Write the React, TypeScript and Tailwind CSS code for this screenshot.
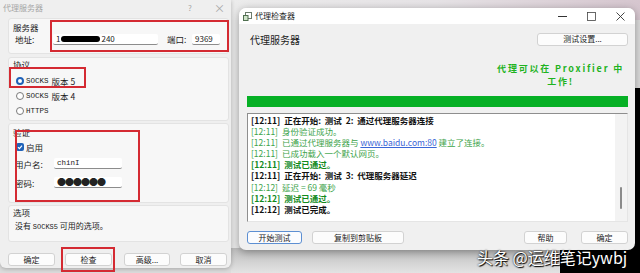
import React from "react";

type LogLine = { time: string; kind: "head" | "ok" | "pass"; text: React.ReactNode };

const logLines: LogLine[] = [
  { time: "[12:11]", kind: "head", text: "正在开始:  测试  2:  通过代理服务器连接" },
  { time: "[12:11]", kind: "ok", text: "身份验证成功。" },
  {
    time: "[12:11]",
    kind: "ok",
    text: (
      <>
        已通过代理服务器与 <span className="text-[#3b66d6] underline">www.baidu.com:80</span> 建立了连接。
      </>
    ),
  },
  { time: "[12:11]", kind: "ok", text: "已成功载入一个默认网页。" },
  { time: "[12:11]", kind: "pass", text: "测试已通过。" },
  { time: "[12:11]", kind: "head", text: "正在开始:  测试  3:  代理服务器延迟" },
  { time: "[12:12]", kind: "ok", text: "延迟 = 69 毫秒" },
  { time: "[12:12]", kind: "pass", text: "测试已通过。" },
  { time: "[12:12]", kind: "head", text: "测试已完成。" },
];

const kindClass = {
  head: "text-[#111] font-bold",
  ok: "text-[#3da34a]",
  pass: "text-[#128a1c] font-bold",
};

function Radio({ on }: { on?: boolean }) {
  return on ? (
    <span className="ml-[3px] w-[8px] h-[8px] rounded-full border-[2px] border-[#2062b8] bg-white" />
  ) : (
    <span className="ml-[3px] w-[8px] h-[8px] rounded-full border border-[#7a7a7a] bg-white" />
  );
}

function Field({ w, children }: { w: string; children?: React.ReactNode }) {
  return (
    <div className={`${w} h-[11px] bg-white border-b border-[#8c8c8c] rounded-[2px] flex items-center pl-[3px] text-[8px] text-[#222]`}>
      {children}
    </div>
  );
}

function Btn({ w, children, primary }: { w: string; children: React.ReactNode; primary?: boolean }) {
  return (
    <div
      className={`${w} h-[13px] rounded-[3px] flex items-center justify-center text-[8px] text-[#222] ${
        primary ? "bg-[#fbfcfe] border border-[#5d8fd2]" : "bg-[#fcfcfc] border border-[#d2d2d2]"
      }`}
    >
      {children}
    </div>
  );
}

function ServerDialog() {
  return (
    <div className="absolute left-0 top-0 w-[231px] h-[268px] bg-[#efefef] rounded-b-[6px] shadow-[0_1px_4px_rgba(0,0,0,0.25)] flex flex-col text-[8.5px] leading-[10px] text-[#1c1c1c]">
      {/* title bar */}
      <div className="h-[15px] flex items-center pl-[3px] pr-[7px] text-[#a6a6a6]">
        <span className="text-[8px]">代理服务器</span>
        <span className="ml-auto w-[10px] text-center text-[8px]">?</span>
        <span className="ml-[19px] w-[10px] text-center text-[11px]">×</span>
      </div>

      <div className="pl-[8px] pr-[2px] flex flex-col">
        {/* server */}
        <div className="mt-[3px] h-[36px] bg-[#f7f7f7] border border-[#e3e3e3] rounded-[3px] pl-[4px] pt-[3px]">
          <div>服务器</div>
          <div className="flex items-center mt-[1px] h-[12px]">
            <span className="pl-[2px] w-[40px]">地址:</span>
            <Field w="w-[105px]">
              1<span className="inline-block w-[39px] h-[6px] rounded-full bg-black mx-[1px]" />
              240
            </Field>
            <span className="ml-[9px] w-[25px]">端口:</span>
            <Field w="w-[28px]">9369</Field>
          </div>
        </div>

        {/* protocol */}
        <div className="mt-[3px] h-[64px] bg-[#f7f7f7] border border-[#e3e3e3] rounded-[3px] pl-[4px] pt-[1px]">
          <div>协议</div>
          <div className="mt-[4px] flex flex-col">
            {[
              { on: true, label: "版本 5", proto: "SOCKS" },
              { on: false, label: "版本 4", proto: "SOCKS" },
              { on: false, label: "", proto: "HTTPS" },
            ].map((r) => (
              <div key={r.proto + r.label} className="h-[15px] flex items-center">
                <Radio on={r.on} />
                <span className="ml-[2px] font-[family-name:'Liberation_Mono',monospace] text-[7.5px]">{r.proto}</span>
                {r.label && <span className="ml-[3px]">{r.label}</span>}
              </div>
            ))}
          </div>
        </div>

        {/* auth */}
        <div className="mt-[2px] h-[80px] bg-[#f7f7f7] border border-[#e3e3e3] rounded-[3px] pl-[4px] pt-[3px]">
          <div>验证</div>
          <div className="mt-[4px] h-[12px] flex items-center">
            <span className="ml-[3px] w-[8px] h-[8px] rounded-[2px] bg-[#2062b8] flex items-center justify-center">
              <svg width="6" height="6" viewBox="0 0 6 6">
                <path d="M1 3.2 L2.4 4.6 L5 1.6" stroke="white" strokeWidth="1.2" fill="none" />
              </svg>
            </span>
            <span className="ml-[2px]">启用</span>
          </div>
          <div className="mt-[5px] flex items-center">
            <span className="pl-[2px] w-[41px]">用户名:</span>
            <Field w="w-[68px]">
              <span className="font-[family-name:'Liberation_Mono',monospace] text-[7.5px]">chinI</span>
            </Field>
          </div>
          <div className="mt-[8px] flex items-center">
            <span className="pl-[2px] w-[41px]">密码:</span>
            <Field w="w-[68px]">
              <span className="text-[9px] leading-[10px] tracking-[-1px]">●●●●●●</span>
            </Field>
          </div>
        </div>

        {/* options */}
        <div className="mt-[2px] h-[37px] bg-[#f7f7f7] border border-[#e3e3e3] rounded-[3px] pl-[4px] pt-[1px]">
          <div>选项</div>
          <div className="mt-[4px] pl-[2px] text-[8px]">
            没有 <span className="font-[family-name:'Liberation_Mono',monospace] text-[7px]">SOCKS5</span> 可用的选项。
          </div>
        </div>

        {/* buttons */}
        <div className="mt-[11px] flex">
          <Btn w="w-[47px]">确定</Btn>
          <div className="ml-[10px]">
            <Btn w="w-[47px]">检查</Btn>
          </div>
          <div className="ml-[12px]">
            <Btn w="w-[46px]">高级...</Btn>
          </div>
          <div className="ml-[10px]">
            <Btn w="w-[47px]">取消</Btn>
          </div>
        </div>
      </div>
    </div>
  );
}

function CheckerWindow() {
  return (
    <div className="absolute left-[239px] top-[8px] w-[396px] h-[242px] rounded-[7px] overflow-hidden bg-[#f0f0f0] shadow-[0_2px_8px_rgba(0,0,0,0.35)] flex flex-col text-[#1c1c1c]">
      {/* title bar */}
      <div className="h-[16px] bg-white flex items-center pl-[4px]">
        <svg width="9" height="9" viewBox="0 0 9 9">
          <rect x="2.5" y="0.5" width="6" height="6" fill="#fff" stroke="#6b7b6b" />
          <rect x="0.5" y="3.5" width="4.5" height="5" fill="#cfe3c9" stroke="#4f6f4f" />
        </svg>
        <span className="ml-[3px] text-[8px] text-[#222]">代理检查器</span>
        <div className="ml-auto flex h-full">
          <div className="w-[29px] flex items-center justify-center">
            <svg width="9" height="9" viewBox="0 0 9 9">
              <path d="M0 4.5 H9" stroke="#333" strokeWidth="1" />
            </svg>
          </div>
          <div className="w-[29px] flex items-center justify-center">
            <svg width="9" height="9" viewBox="0 0 9 9">
              <rect x="0.5" y="0.5" width="8" height="8" fill="none" stroke="#444" strokeWidth="0.8" />
            </svg>
          </div>
          <div className="w-[29px] flex items-center justify-center">
            <svg width="9" height="9" viewBox="0 0 9 9">
              <path d="M0.5 0.5 L8.5 8.5 M8.5 0.5 L0.5 8.5" stroke="#333" strokeWidth="0.9" />
            </svg>
          </div>
        </div>
      </div>

      <div className="pl-[8px] pr-[7px] flex flex-col">
        <div className="mt-[8px] h-[14px] flex items-center justify-between">
          <span className="pl-[3px] text-[10px] text-[#222]">代理服务器</span>
          <Btn w="w-[91px]">测试设置...</Btn>
        </div>

        <div className="mt-[16px] self-end mr-[4px] text-center font-bold text-[9px] tracking-[1.8px] text-[#1fb31f]">
          <div className="h-[13px] leading-[13px]">代理可以在 Proxifier 中</div>
          <div className="h-[13px] leading-[13px]">工作!</div>
        </div>

        <div className="mt-[8px] h-[11px] bg-[#06b025]" />

        <div className="mt-[6px] h-[109px] bg-white border border-[#8e8e8e] border-r-[#e5e5e5] border-b-[#e5e5e5] flex">
          <div className="flex-1 pl-[3px] pt-[1px] text-[8.5px] leading-[11.1px] whitespace-pre overflow-hidden">
            {logLines.map((l, i) => (
              <div key={i} className={kindClass[l.kind]}>
                <span className="mr-[4px]">{l.time}</span>
                {l.text}
              </div>
            ))}
          </div>
          <div className="w-[12px] bg-[#f3f3f3] flex justify-center">
            <div className="mt-[73px] w-[1.5px] h-[22px] bg-[#8a8a8a] rounded-full" />
          </div>
        </div>

        <div className="mt-[9px] flex items-center">
          <Btn w="w-[55px]" primary>
            开始测试
          </Btn>
          <div className="ml-[10px]">
            <Btn w="w-[92px]">复制到剪贴板</Btn>
          </div>
          <div className="ml-auto">
            <Btn w="w-[43px]">帮助</Btn>
          </div>
          <div className="ml-[14px]">
            <Btn w="w-[47px]">确定</Btn>
          </div>
        </div>
      </div>
    </div>
  );
}

export default function App() {
  return (
    <div className="relative w-[640px] h-[273px] overflow-hidden bg-[#dcdcdc] font-[family-name:'Noto_Sans_CJK_SC','Liberation_Sans',sans-serif]">
      {/* desktop behind the dialogs */}
      <div className="absolute left-[231px] top-0 w-[409px] h-[20px] bg-gradient-to-r from-[#ececec] via-[#e6e3e6] to-[#d6c6cf]" />
      <div className="absolute left-[231px] top-[20px] w-[8px] h-[250px] bg-[#e9e9e9]" />
      <div className="absolute left-[231px] top-[248px] w-[340px] h-[25px] bg-gradient-to-b from-[#bebebe] to-[#e3e3e3]" />
      <div className="absolute left-[630px] top-[88px] w-[10px] h-[185px] bg-black" />
      <div className="absolute left-[560px] top-[244px] w-[80px] h-[29px] bg-black" />

      <ServerDialog />
      <CheckerWindow />

      {/* red annotation frames */}
      <div className="absolute left-[50px] top-[20px] w-[179px] h-[32px] border-[2px] border-[#d42a32]" />
      <div className="absolute left-[9px] top-[67px] w-[77px] h-[21px] border-[2px] border-[#d42a32]" />
      <div className="absolute left-[15px] top-[130px] w-[125px] h-[72px] border-[2px] border-[#d42a32]" />
      <div className="absolute left-[61px] top-[247px] w-[54px] h-[25px] border-[2px] border-[#d42a32]" />

      {/* watermark */}
      <div className="absolute left-[477px] top-[247px] text-[16px] leading-[20px] text-white [text-shadow:0_0_2px_#000,1px_1px_1px_#000]">
        头条 @运维笔记ywbj
      </div>
    </div>
  );
}
